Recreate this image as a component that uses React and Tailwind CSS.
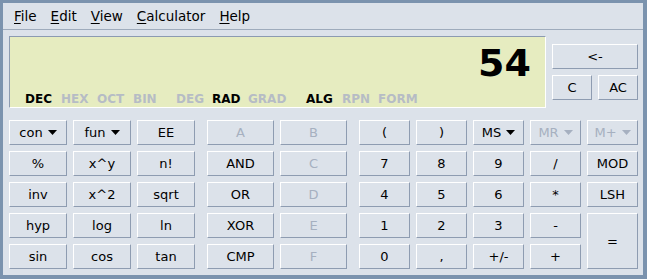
import React from 'react';

const Tri = () => (
  <svg width="9" height="5" viewBox="0 0 9 5" className="ml-[5px]">
    <polygon points="0,0 9,0 4.5,5" fill="currentColor" />
  </svg>
);

const Btn = ({ children, disabled, drop, className = '' }) => (
  <div
    className={`flex items-center justify-center border border-t-white border-l-white border-r-[#8e9cb1] border-b-[#8e9cb1] bg-[#dce2ea] text-[13px] leading-none ${
      disabled ? 'text-[#a6b0c0]' : 'text-black'
    } ${className}`}
  >
    <span>{children}</span>
    {drop && <Tri />}
  </div>
);

const Mode = ({ children, on, className = '' }) => (
  <span className={`w-[36px] shrink-0 font-bold ${on ? 'text-black' : 'text-[#b6bcc5]'} ${className}`}>{children}</span>
);

const menus = ['File', 'Edit', 'View', 'Calculator', 'Help'];

export default function App() {
  return (
    <div
      className="w-[647px] h-[279px] bg-[#7b93ae] pt-[3px] pl-[3px] pr-[4px] pb-[4px]"
      style={{ fontFamily: '"DejaVu Sans", sans-serif' }}
    >
      <div className="h-full bg-[#dce2ea] flex flex-col">
        <div className="h-[27px] flex items-center pl-[4px] border-b border-b-[#9eabbc] text-[13.5px] text-black">
          {menus.map((m) => (
            <span key={m} className="px-[7px]">
              <span className="underline underline-offset-2">{m[0]}</span>
              {m.slice(1)}
            </span>
          ))}
        </div>

        <div className="pl-[6px] pr-[5px] pt-[6px]">
          <div className="flex gap-[6px]">
            <div className="w-[537px] h-[72px] bg-[#e6ecc0] border border-t-[#8c9bb1] border-l-[#8c9bb1] border-r-white border-b-white flex flex-col">
              <div className="pt-[7px] pr-[14px] text-right text-[38px] font-bold leading-none h-[45px]">54</div>
              <div className="mt-[11px] pl-[15px] flex text-[12px] leading-none h-[12px]">
                <Mode on>DEC</Mode>
                <Mode>HEX</Mode>
                <Mode>OCT</Mode>
                <Mode>BIN</Mode>
                <Mode className="ml-[7px]">DEG</Mode>
                <Mode on>RAD</Mode>
                <Mode>GRAD</Mode>
                <Mode className="ml-[22px]" on>ALG</Mode>
                <Mode>RPN</Mode>
                <Mode>FORM</Mode>
              </div>
            </div>
            <div className="w-[86px] pt-[8px] flex flex-col gap-[6px]">
              <Btn className="h-[25px]">&lt;-</Btn>
              <div className="flex gap-[6px]">
                <Btn className="h-[25px] w-[40px]">C</Btn>
                <Btn className="h-[25px] w-[40px]">AC</Btn>
              </div>
            </div>
          </div>

          <div className="mt-[12px] flex gap-[12px]">
            <div className="grid grid-cols-[repeat(3,58px)] grid-rows-[repeat(5,25px)] gap-[6px]">
              <Btn drop>con</Btn>
              <Btn drop>fun</Btn>
              <Btn>EE</Btn>
              <Btn>%</Btn>
              <Btn>x^y</Btn>
              <Btn>n!</Btn>
              <Btn>inv</Btn>
              <Btn>x^2</Btn>
              <Btn>sqrt</Btn>
              <Btn>hyp</Btn>
              <Btn>log</Btn>
              <Btn>ln</Btn>
              <Btn>sin</Btn>
              <Btn>cos</Btn>
              <Btn>tan</Btn>
            </div>
            <div className="grid grid-cols-[repeat(2,67px)] grid-rows-[repeat(5,25px)] gap-[6px]">
              <Btn disabled>A</Btn>
              <Btn disabled>B</Btn>
              <Btn>AND</Btn>
              <Btn disabled>C</Btn>
              <Btn>OR</Btn>
              <Btn disabled>D</Btn>
              <Btn>XOR</Btn>
              <Btn disabled>E</Btn>
              <Btn>CMP</Btn>
              <Btn disabled>F</Btn>
            </div>
            <div className="grid grid-cols-[repeat(5,51px)] grid-rows-[repeat(5,25px)] gap-[6px]">
              <Btn>(</Btn>
              <Btn>)</Btn>
              <Btn drop>MS</Btn>
              <Btn drop disabled>MR</Btn>
              <Btn drop disabled>M+</Btn>
              <Btn>7</Btn>
              <Btn>8</Btn>
              <Btn>9</Btn>
              <Btn>/</Btn>
              <Btn>MOD</Btn>
              <Btn>4</Btn>
              <Btn>5</Btn>
              <Btn>6</Btn>
              <Btn>*</Btn>
              <Btn>LSH</Btn>
              <Btn>1</Btn>
              <Btn>2</Btn>
              <Btn>3</Btn>
              <Btn>-</Btn>
              <Btn className="row-span-2 col-start-5 row-start-4">=</Btn>
              <Btn>0</Btn>
              <Btn>,</Btn>
              <Btn>+/-</Btn>
              <Btn>+</Btn>
            </div>
          </div>
        </div>
      </div>
    </div>
  );
}
